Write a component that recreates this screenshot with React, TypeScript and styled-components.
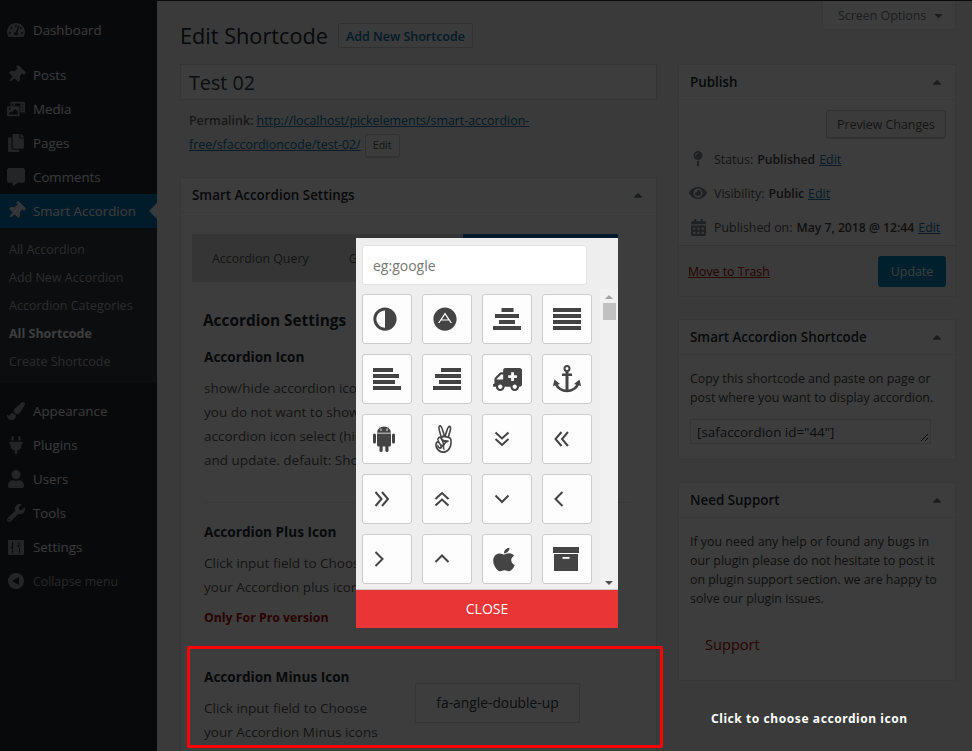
import React, { ReactNode } from 'react'
import styled, { createGlobalStyle } from 'styled-components'
import {
  FaAdjust, FaAdn, FaAmbulance, FaAngellist, FaApple,
  FaTachometerAlt, FaThumbtack, FaPhotoVideo, FaCopy, FaCommentAlt, FaPaintBrush, FaPlug,
  FaUser, FaWrench, FaCaretUp, FaCaretDown, FaMapPin, FaEye, FaCalendarAlt,
} from 'react-icons/fa'

const GlobalStyle = createGlobalStyle`
  html, body { margin: 0; padding: 0; background: #3a3a3a; }
  * { box-sizing: border-box; }
  body { font-family: "Open Sans", "Liberation Sans", sans-serif; font-size: 12.4px; color: #444; }
`

function SettingsGlyph() {
  return (
    <svg viewBox="0 0 20 20" width="20" height="20">
      <path fill="currentColor" fillRule="evenodd" d="M2 3h16v15H2zM6 5v5H4.5L7 13l.1-8zM7 13v3H6v-3zM12.5 5h1v3h-1zM11 8h4l-2 3zM13 8h1v8h-1z" />
    </svg>
  )
}

function CollapseGlyph() {
  return (
    <svg viewBox="0 0 20 20" width="20" height="20">
      <path fill="currentColor" fillRule="evenodd" d="M10 2a8 8 0 1 1 0 16 8 8 0 0 1 0-16zM13 6l-7 4 7 4z" />
    </svg>
  )
}

const menuTop = [
  { label: 'Posts', icon: <FaThumbtack style={{ transform: 'rotate(45deg)' }} /> },
  { label: 'Media', icon: <FaPhotoVideo /> },
  { label: 'Pages', icon: <FaCopy /> },
  { label: 'Comments', icon: <FaCommentAlt /> },
]
const subMenu = ['All Accordion', 'Add New Accordion', 'Accordion Categories', 'All Shortcode', 'Create Shortcode']
const menuBottom = [
  { label: 'Appearance', icon: <FaPaintBrush /> },
  { label: 'Plugins', icon: <FaPlug /> },
  { label: 'Users', icon: <FaUser /> },
  { label: 'Tools', icon: <FaWrench /> },
  { label: 'Settings', icon: <SettingsGlyph /> },
]

// font awesome 4 bars, [offset, width] for every row
function Bars({ rows }: { rows: number[][] }) {
  return (
    <svg viewBox="0 0 28 22" width="28" height="22">
      {rows.map(([x, w], i) => <rect key={i} x={x} y={i * 6} width={w} height="4" fill="#444" />)}
    </svg>
  )
}

const chevrons: Record<string, string[]> = {
  doubleDown: ['M1.5 1.5 8 7.5l6.5-6', 'M1.5 8 8 14l6.5-6'],
  doubleLeft: ['M7.5 1 1.5 8l6 7', 'M14 1 8 8l6 7'],
  doubleRight: ['M1.5 1 7.5 8l-6 7', 'M8 1l6 7-6 7'],
  doubleUp: ['M1.5 8 8 2l6.5 6', 'M1.5 14.5 8 8.5l6.5 6'],
  down: ['M1.5 4.5 8 11l6.5-6.5'],
  left: ['M8.5 1 1.5 8l7 7'],
  right: ['M1.5 1l7 7-7 7'],
  up: ['M1.5 11 8 4.5 14.5 11'],
}

function Angle({ name }: { name: string }) {
  return (
    <AngleSvg viewBox="0 0 16 16" width="16" height="16">
      {chevrons[name].map((d) => <path key={d} d={d} fill="none" stroke="#444" strokeWidth="2" />)}
    </AngleSvg>
  )
}

function AndroidGlyph() {
  return (
    <svg viewBox="0 0 22 26" width="22" height="26" fill="#444">
      <path d="M4 6.7a7 6.2 0 0 1 14 0z" />
      <path d="M6.5.5 8 3M15.5.5 14 3" stroke="#999" strokeWidth="1" />
      <circle cx="8" cy="4" r=".8" fill="#fdfdfd" />
      <circle cx="14" cy="4" r=".8" fill="#fdfdfd" />
      <path d="M4 7.500h14v11.500a1.500 1.500 0 0 1-1.500 1.500h-11A1.500 1.500 0 0 1 4 19z" />
      <rect x="0" y="7.500" width="3" height="10" rx="1.500" />
      <rect x="19" y="7.500" width="3" height="10" rx="1.500" />
      <rect x="6.500" y="18" width="3.200" height="8" rx="1.600" />
      <rect x="12.300" y="18" width="3.200" height="8" rx="1.600" />
    </svg>
  )
}

function AnchorGlyph() {
  return (
    <svg viewBox="0 0 28 28" width="28" height="28" fill="#444">
      <circle cx="14" cy="3.500" r="2.500" fill="none" stroke="#444" strokeWidth="2" />
      <rect x="12.500" y="6" width="3" height="20" />
      <rect x="9" y="8.500" width="10" height="2.500" />
      <path d="M3 19c1.500 4 6 7 11 7s9.500-3 11-7" fill="none" stroke="#444" strokeWidth="2.600" />
      <path d="M0 21l1.500-6.500L7 19zM28 21l-1.500-6.500L21 19z" />
    </svg>
  )
}

function ArchiveGlyph() {
  return (
    <svg viewBox="0 0 26 24" width="26" height="24" fill="#444">
      <rect x="0" y="0" width="26" height="6" />
      <rect x="1" y="7" width="24" height="17" />
      <rect x="9.500" y="10" width="7" height="1.800" fill="#fdfdfd" />
    </svg>
  )
}

function pickerIcons(): ReactNode[] {
  return [
    <FlipIcon><FaAdjust size={24} /></FlipIcon>,
    <FaAdn size={24} />,
    <Bars rows={[[8.5, 12], [2, 24], [6, 16], [0, 28]]} />,
    <Bars rows={[[0, 28], [0, 28], [0, 28], [0, 28]]} />,
    <Bars rows={[[0, 20], [0, 26], [0, 22], [0, 28]]} />,
    <Bars rows={[[8, 20], [2, 26], [6, 22], [0, 28]]} />,
    <FlipIcon><FaAmbulance size={29} /></FlipIcon>,
    <AnchorGlyph />,
    <AndroidGlyph />,
    <SizedIcon $w={21} $h={28}><FaAngellist preserveAspectRatio="none" /></SizedIcon>,
    <Angle name="doubleDown" />,
    <Angle name="doubleLeft" />,
    <Angle name="doubleRight" />,
    <Angle name="doubleUp" />,
    <Angle name="down" />,
    <Angle name="left" />,
    <Angle name="right" />,
    <Angle name="up" />,
    <SizedIcon $w={22} $h={27}><FaApple preserveAspectRatio="none" /></SizedIcon>,
    <ArchiveGlyph />,
  ]
}

function Box({ title, children }: { title: string, children: ReactNode }) {
  return (
    <Postbox>
      <BoxHeader>
        <span>{title}</span>
        <CaretIcon><FaCaretUp size={14} /></CaretIcon>
      </BoxHeader>
      {children}
    </Postbox>
  )
}

export default function App() {
  return (
    <Page>
      <GlobalStyle />
      <TopEdge />
      <Layout>
        <Sidebar>
          <MenuItem><MenuIcon><FaTachometerAlt /></MenuIcon>Dashboard</MenuItem>
          <MenuGroup>
            {menuTop.map((m) => <MenuItem key={m.label}><MenuIcon>{m.icon}</MenuIcon>{m.label}</MenuItem>)}
            <MenuItem $active>
              <MenuIcon $active><FaThumbtack style={{ transform: 'rotate(45deg)' }} /></MenuIcon>
              Smart Accordion
              <ActiveArrow />
            </MenuItem>
            <SubMenu>
              {subMenu.map((s) => <SubItem key={s} $current={s === 'All Shortcode'}>{s}</SubItem>)}
            </SubMenu>
          </MenuGroup>
          <MenuGroup>
            {menuBottom.map((m) => <MenuItem key={m.label}><MenuIcon>{m.icon}</MenuIcon>{m.label}</MenuItem>)}
            <MenuItem $muted><MenuIcon><CollapseGlyph /></MenuIcon>Collapse menu</MenuItem>
          </MenuGroup>
        </Sidebar>

        <Content>
          <LeftColumn>
            <Heading>
              <h1>Edit Shortcode</h1>
              <AddNew>Add New Shortcode</AddNew>
            </Heading>
            <TitleField>Test 02</TitleField>
            <Permalink>
              <strong>Permalink:</strong> <a>http://localhost/pickelements/smart-accordion-free/sfaccordioncode/test-02/</a>
              <SmallButton>Edit</SmallButton>
            </Permalink>
            <Box title="Smart Accordion Settings">
              <SettingsBody>
                <TabBar>
                  <Tab>Accordion Query</Tab>
                  <Tab>General</Tab>
                  <ActiveTab>Accordion Settings</ActiveTab>
                </TabBar>
                <Pane>
                  <PaneTitle>Accordion Settings</PaneTitle>
                  <Field>
                    <FieldTitle>Accordion Icon</FieldTitle>
                    <FieldText>show/hide accordion icon. if you do not want to show accordion icon select (hide) and update. default: Show</FieldText>
                  </Field>
                  <Rule />
                  <Field>
                    <FieldTitle>Accordion Plus Icon</FieldTitle>
                    <FieldText>Click input field to Choose your Accordion plus icons</FieldText>
                    <ProNote>Only For Pro version</ProNote>
                  </Field>
                  <MinusRow>
                    <Field>
                      <FieldTitle>Accordion Minus Icon</FieldTitle>
                      <FieldText>Click input field to Choose your Accordion Minus icons</FieldText>
                    </Field>
                    <IconField>fa-angle-double-up</IconField>
                  </MinusRow>
                </Pane>
              </SettingsBody>
            </Box>
          </LeftColumn>

          <RightColumn>
            <ScreenOptions>Screen Options <FaCaretDown size={13} /></ScreenOptions>
            <Box title="Publish">
              <PublishBody>
                <PreviewRow><SecondaryButton>Preview Changes</SecondaryButton></PreviewRow>
                <MetaRow><MetaIcon><FaMapPin size={16} /></MetaIcon>Status:<b>Published</b><a>Edit</a></MetaRow>
                <MetaRow><MetaIcon><FaEye size={18} /></MetaIcon>Visibility:<b>Public</b><a>Edit</a></MetaRow>
                <MetaRow><MetaIcon><FaCalendarAlt size={17} /></MetaIcon>Published on:<b>May 7, 2018 @ 12:44</b><a>Edit</a></MetaRow>
              </PublishBody>
              <PublishFooter>
                <TrashLink>Move to Trash</TrashLink>
                <PrimaryButton>Update</PrimaryButton>
              </PublishFooter>
            </Box>
            <Box title="Smart Accordion Shortcode">
              <SideBody>
                <SideText>Copy this shortcode and paste on page or post where you want to display accordion.</SideText>
                <ShortcodeField>[safaccordion id="44"]<ResizeGrip viewBox="0 0 10 10"><path d="M9 2 2 9M9 6 6 9" stroke="#222" fill="none" /></ResizeGrip></ShortcodeField>
              </SideBody>
            </Box>
            <Box title="Need Support">
              <SideBody>
                <SideText>If you need any help or found any bugs in our plugin please do not hesitate to post it on plugin support section. we are happy to solve our plugin issues.</SideText>
                <SupportLink>Support</SupportLink>
              </SideBody>
            </Box>
          </RightColumn>
        </Content>
      </Layout>

      <Overlay />
      <Highlight />
      <Caption>Click to choose accordion icon</Caption>

      <Picker>
        <SearchInput placeholder="eg:google" />
        <PickerMain>
          <IconGrid>
            {pickerIcons().map((icon, i) => <IconButton key={i}>{icon}</IconButton>)}
          </IconGrid>
          <FakeScrollbar>
            <ScrollArrow />
            <ScrollThumb />
            <ScrollArrow $down />
          </FakeScrollbar>
        </PickerMain>
        <CloseButton>CLOSE</CloseButton>
      </Picker>
    </Page>
  )
}

const Page = styled.div`
  position: relative;
  width: 972px;
  height: 751px;
  overflow: hidden;
  background: #f1f1f1;
`
const TopEdge = styled.div`
  height: 1px;
  background: #23282d;
`
const Layout = styled.div`
  display: flex;
  height: 750px;
`
const Sidebar = styled.nav`
  flex: 0 0 157px;
  padding-top: 12px;
  background: #23282d;
`
const MenuGroup = styled.div`
  margin-top: 11px;
`
const MenuItem = styled.div<{ $active?: boolean, $muted?: boolean }>`
  position: relative;
  display: flex;
  align-items: center;
  height: 34px;
  padding-left: 6px;
  font-size: ${({ $muted }) => $muted ? '12.3px' : '13.3px'};
  color: ${({ $active, $muted }) => $active ? '#fff' : $muted ? '#a0a5aa' : '#eee'};
  background: ${({ $active }) => $active ? '#0073aa' : 'transparent'};
`
const MenuIcon = styled.span<{ $active?: boolean }>`
  display: flex;
  align-items: center;
  justify-content: center;
  width: 20px;
  height: 20px;
  margin-right: 7px;
  font-size: 18px;
  color: ${({ $active }) => $active ? '#dde' : '#959a9f'};
`
const ActiveArrow = styled.span`
  position: absolute;
  right: 0;
  top: 9px;
  border: 8px solid transparent;
  border-left-width: 0;
  border-right-color: #f1f1f1;
`
const SubMenu = styled.div`
  padding: 8px 0 7px;
  background: #32373c;
`
const SubItem = styled.div<{ $current?: boolean }>`
  height: 28px;
  line-height: 28px;
  padding-left: 9px;
  font-size: 12.5px;
  font-weight: ${({ $current }) => $current ? 700 : 400};
  color: ${({ $current }) => $current ? '#fff' : '#b4b9be'};
`
const Content = styled.main`
  flex: 1;
  display: flex;
  gap: 21px;
  padding: 0 16px 0 23px;
  min-width: 0;
`
const LeftColumn = styled.div`
  flex: 0 0 477px;
  padding-top: 22px;
`
const RightColumn = styled.div`
  flex: 1;
  min-width: 0;
  display: flex;
  flex-direction: column;
`
const Heading = styled.div`
  display: flex;
  align-items: center;
  gap: 10px;
  height: 25px;
  h1 {
    margin: 0;
    font-size: 21.7px;
    font-weight: 400;
    color: #23282d;
  }
`
const AddNew = styled.span`
  padding: 0 7px;
  height: 25px;
  line-height: 25px;
  border: 1px solid #ccc;
  border-radius: 2px;
  font-size: 12.5px;
  font-weight: 600;
  color: #0073aa;
  background: #f7f7f7;
`
const TitleField = styled.div`
  height: 36px;
  margin-top: 16px;
  padding-left: 8px;
  line-height: 36px;
  font-size: 19.7px;
  color: #32373c;
  background: #fff;
  border: 1px solid #ddd;
`
const Permalink = styled.div`
  margin: 9px 0 20px;
  padding: 0 10px 0 9px;
  line-height: 24px;
  color: #666;
  strong { font-weight: 600; }
  a { color: #0073aa; text-decoration: underline; }
`
const SmallButton = styled.span`
  display: inline-block;
  margin-left: 4px;
  width: 35px;
  height: 23px;
  text-align: center;
  line-height: 21px;
  font-size: 10.6px;
  color: #555;
  background: #f7f7f7;
  border: 1px solid #ccc;
  border-radius: 3px;
  box-shadow: 0 1px 0 #ccc;
`
const Postbox = styled.section`
  margin-bottom: 22px;
  background: #fff;
  border: 1px solid #e5e5e5;
`
const BoxHeader = styled.header`
  display: flex;
  align-items: center;
  justify-content: space-between;
  height: 35px;
  padding: 0 11px;
  font-size: 13.4px;
  font-weight: 600;
  color: #23282d;
  border-bottom: 1px solid #eee;
`
const CaretIcon = styled.span`
  display: flex;
  color: #72777c;
`
const SettingsBody = styled.div`
  padding: 21px 0 0 11px;
  height: 540px;
`
const TabBar = styled.div`
  display: flex;
  width: 426px;
  height: 48px;
  background: #dedede;
`
const Tab = styled.span`
  padding: 0 20px;
  line-height: 50px;
  white-space: nowrap;
  color: #555;
`
const ActiveTab = styled.span`
  flex: 0 0 155px;
  margin-left: auto;
  line-height: 48px;
  text-align: center;
  color: #fff;
  background: #0073aa;
`
const Pane = styled.div`
  padding: 28px 0 0 12px;
`
const PaneTitle = styled.h2`
  margin: 0 0 14px -1px;
  font-size: 15.4px;
  line-height: 22px;
  font-weight: 700;
  color: #23282d;
`
const Field = styled.div`
  width: 188px;
`
const FieldTitle = styled.h3`
  margin: 0 0 8px;
  font-size: 13.6px;
  line-height: 22px;
  font-weight: 700;
  color: #23282d;
`
const FieldText = styled.p`
  margin: 0;
  font-size: 13.5px;
  line-height: 24px;
  color: #555;
`
const Rule = styled.hr`
  width: 428px;
  margin: 30px 0 18px;
  border: 0;
  border-top: 1px solid #eee;
`
const ProNote = styled.div`
  margin-top: 7px;
  font-size: 12.3px;
  line-height: 24px;
  font-weight: 700;
  color: #a00;
`
const MinusRow = styled.div`
  display: flex;
  align-items: flex-start;
  gap: 23px;
  margin-top: 36px;
`
const IconField = styled.div`
  width: 165px;
  height: 40px;
  margin-top: 17px;
  line-height: 38px;
  text-align: center;
  font-size: 13.8px;
  color: #32373c;
  border: 1px solid #ddd;
`
const ScreenOptions = styled.div`
  align-self: flex-end;
  display: flex;
  align-items: center;
  gap: 6px;
  width: 134px;
  height: 29px;
  padding: 1px 0 0 15px;
  margin-bottom: 34px;
  color: #72777c;
  background: #fff;
  border: 1px solid #e5e5e5;
  border-top: 0;
`
const PublishBody = styled.div`
  padding: 10px 9px 1px 10px;
`
const PreviewRow = styled.div`
  display: flex;
  justify-content: flex-end;
  margin-bottom: 4px;
`
const SecondaryButton = styled.span`
  height: 28px;
  line-height: 27px;
  padding: 0 10px;
  color: #555;
  background: #f7f7f7;
  border: 1px solid #ccc;
  border-radius: 3px;
  box-shadow: 0 1px 0 #ccc;
`
const MetaRow = styled.div`
  display: flex;
  align-items: center;
  height: 34px;
  white-space: pre;
  color: #555;
  b { margin-left: 4px; font-size: 12.2px; font-weight: 600; color: #444; }
  a { margin-left: 4px; color: #0073aa; text-decoration: underline; }
`
const MetaIcon = styled.span`
  display: flex;
  justify-content: center;
  width: 18px;
  margin-right: 7px;
  color: #82878c;
`
const PublishFooter = styled.div`
  display: flex;
  align-items: center;
  justify-content: space-between;
  padding: 10px 9px 9px 9px;
  border-top: 1px solid #ddd;
  background: #f5f5f5;
`
const TrashLink = styled.a`
  margin-top: -1px;
  font-size: 12.3px;
  color: #a00;
  text-decoration: underline;
`
const PrimaryButton = styled.span`
  width: 68px;
  height: 31px;
  line-height: 32px;
  text-align: center;
  font-size: 12.4px;
  color: #fff;
  background: #0085ba;
  border-radius: 3px;
`
const SideBody = styled.div`
  padding: 14px 11px 15px;
`
const SideText = styled.p`
  margin: 0;
  line-height: 19px;
  color: #444;
`
const ShortcodeField = styled.div`
  position: relative;
  width: 241px;
  height: 25px;
  margin-top: 12px;
  padding-left: 6px;
  line-height: 24px;
  font-size: 13.4px;
  color: #32373c;
  background: #fff;
  border: 1px solid #ddd;
`
const ResizeGrip = styled.svg`
  position: absolute;
  right: 1px;
  bottom: 1px;
  width: 10px;
  height: 10px;
`
const SupportLink = styled.div`
  margin: 25px 0 10px 15px;
  font-size: 14.6px;
  line-height: 22px;
  color: #a00;
`
const Overlay = styled.div`
  position: absolute;
  inset: 0;
  background: rgba(0, 0, 0, 0.76);
`
const Highlight = styled.div`
  position: absolute;
  left: 187px;
  top: 646px;
  width: 476px;
  height: 102px;
  border: 3px solid #f00;
  border-radius: 2px;
`
const Caption = styled.div`
  position: absolute;
  left: 711px;
  top: 710px;
  font-family: "Noto Sans", sans-serif;
  font-size: 12px;
  font-weight: 700;
  line-height: 18px;
  letter-spacing: 0.57px;
  color: #fff;
`
const Picker = styled.div`
  position: absolute;
  left: 356px;
  top: 238px;
  width: 262px;
  height: 390px;
  display: flex;
  flex-direction: column;
  background: #eee;
`
const SearchInput = styled.input`
  flex: 0 0 40px;
  width: 225px;
  margin: 7px 0 0 6px;
  padding: 0 10px;
  font: 14px "Open Sans", sans-serif;
  background: #fff;
  border: 1px solid #e3e3e3;
  border-radius: 3px;
  outline: none;
  &::placeholder { color: #777; opacity: 1; }
`
const PickerMain = styled.div`
  flex: 1;
  display: flex;
  min-height: 0;
  margin-top: 4px;
  border-bottom: 1px solid #ccc;
`
const IconGrid = styled.div`
  flex: 1;
  display: grid;
  grid-template-columns: repeat(4, 50px);
  grid-auto-rows: 50px;
  gap: 10px;
  padding: 5px 0 0 6px;
  overflow: hidden;
`
const IconButton = styled.div`
  display: flex;
  align-items: center;
  padding-left: 10px;
  color: #444;
  background: #fdfdfd;
  border: 1px solid #ccc;
  border-radius: 3px;
`
const FlipIcon = styled.span`
  display: flex;
  transform: scaleX(-1);
`
const SizedIcon = styled.span<{ $w: number, $h: number }>`
  display: flex;
  svg {
    width: ${({ $w }) => $w}px;
    height: ${({ $h }) => $h}px;
  }
`
const AngleSvg = styled.svg`
  margin-left: 1px;
`
const FakeScrollbar = styled.div`
  flex: 0 0 18px;
  display: flex;
  flex-direction: column;
  align-items: center;
  padding: 6px 0 4px;
  background: #f1f1f1;
`
const ScrollThumb = styled.div`
  width: 13px;
  height: 17px;
  margin-top: 4px;
  background: #c1c1c1;
`
const ScrollArrow = styled.div<{ $down?: boolean }>`
  width: 0;
  height: 0;
  border-left: 4px solid transparent;
  border-right: 4px solid transparent;
  ${({ $down }) => $down
    ? 'border-top: 4px solid #505050; margin-top: auto;'
    : 'border-bottom: 4px solid #a3a3a3;'}
`
const CloseButton = styled.div`
  flex: 0 0 38px;
  line-height: 38px;
  text-align: center;
  font-size: 14px;
  color: #fff;
  background: #e93535;
`
